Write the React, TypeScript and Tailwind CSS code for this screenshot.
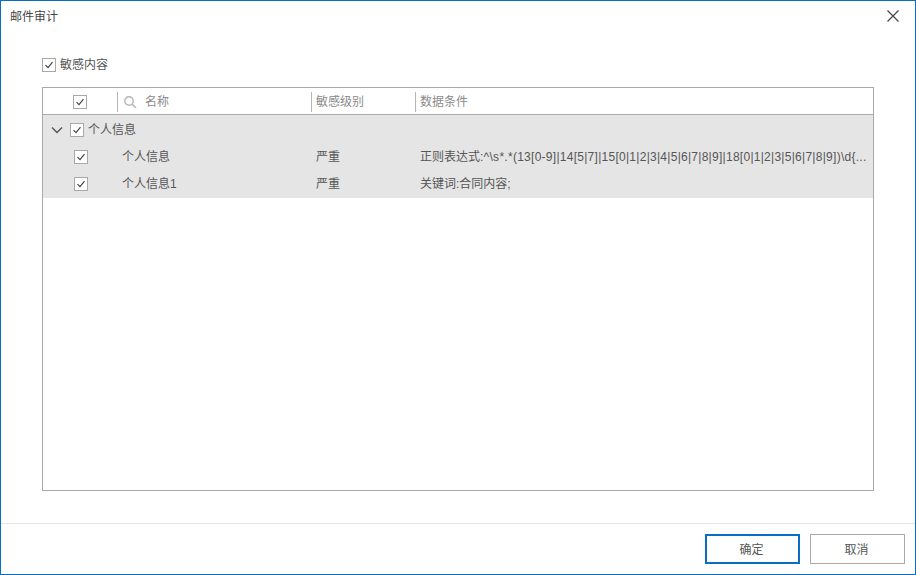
import React from "react";

function Check({ className = "" }: { className?: string }) {
  return (
    <span className={`flex h-[14px] w-[14px] shrink-0 items-center justify-center border border-[#a9a9a9] bg-white ${className}`}>
      <svg width="12" height="12" viewBox="0 0 12 12" fill="none">
        <path d="M2.5 6.2 L5 8.7 L9.5 3.2" stroke="#444444" strokeWidth="1.2" />
      </svg>
    </span>
  );
}

function Row({ name, level, cond }: { name: string; level: string; cond: React.ReactNode }) {
  return (
    <div className="flex h-[27px] items-center">
      <div className="flex w-[78px] shrink-0 pl-[31px]">
        <Check />
      </div>
      <div className="w-[195px] shrink-0 pl-[1px]">{name}</div>
      <div className="w-[104px] shrink-0">{level}</div>
      <div className="min-w-0 flex-1 whitespace-nowrap">{cond}</div>
    </div>
  );
}

export default function App() {
  return (
    <div className="flex h-[575px] w-[916px] flex-col overflow-hidden border border-[#0a6fc2] bg-white text-[12px] leading-none text-[#555555] [font-family:'Liberation_Sans','Noto_Sans_CJK_SC',sans-serif]">
      <div className="flex h-[31px] shrink-0 items-center justify-between pl-[9px] pr-[16px]">
        <span className="text-[#444444]">邮件审计</span>
        <svg className="-mt-[1px]" width="12" height="12" viewBox="0 0 12 12" fill="none">
          <path d="M0.5 0.5 L11.5 11.5 M11.5 0.5 L0.5 11.5" stroke="#444444" strokeWidth="1.2" />
        </svg>
      </div>

      <div className="flex min-h-0 flex-1 flex-col px-[41px] pb-[32px] pt-[25px]">
        <label className="flex h-[16px] shrink-0 items-center gap-[4px]">
          <Check />
          <span>敏感内容</span>
        </label>

        <div className="mt-[14px] flex min-h-0 flex-1 flex-col border border-[#a9a9a9]">
          <div className="flex h-[27px] shrink-0 items-center border-b border-[#a9a9a9] pt-[1px] text-[#8a8a8a]">
            <div className="flex h-[20px] w-[75px] shrink-0 items-center border-r border-[#b5b5b5] pl-[30px]">
              <Check />
            </div>
            <div className="flex h-[20px] w-[194px] shrink-0 items-center border-r border-[#b5b5b5] pl-[5px]">
              <svg width="14" height="14" viewBox="0 0 14 14" fill="none">
                <circle cx="6" cy="6" r="4.2" stroke="#b5b5b5" strokeWidth="1.4" />
                <path d="M9 9 L13 13" stroke="#b5b5b5" strokeWidth="1.6" />
              </svg>
              <span className="ml-[8px]">名称</span>
            </div>
            <div className="flex h-[20px] w-[104px] shrink-0 items-center border-r border-[#b5b5b5] pl-[4px]">敏感级别</div>
            <div className="pl-[4px]">数据条件</div>
          </div>

          <div className="shrink-0 bg-[#e5e5e5] pb-[1px]">
            <div className="flex h-[28px] items-center pt-[1px]">
              <svg className="ml-[8px]" width="12" height="8" viewBox="0 0 12 8" fill="none">
                <path d="M1 1.5 L6 6.5 L11 1.5" stroke="#555555" strokeWidth="1.4" />
              </svg>
              <Check className="ml-[7px]" />
              <span className="ml-[4px]">个人信息</span>
            </div>
            <Row
              name="个人信息"
              level="严重"
              cond={
                <>
                  正则表达式
                  <span className="tracking-[0.27px]">{":^\\s*.*(13[0-9]|14[5|7]|15[0|1|2|3|4|5|6|7|8|9]|18[0|1|2|3|5|6|7|8|9])\\d{..."}</span>
                </>
              }
            />
            <Row name="个人信息1" level="严重" cond="关键词:合同内容;" />
          </div>
        </div>
      </div>

      <div className="flex h-[51px] shrink-0 items-start justify-end gap-[10px] border-t border-[#e3e3e3] pr-[10px] pt-[10px]">
        <button className="h-[30px] w-[95px] border-2 border-[#0a6fc2] bg-white pr-[2px] pt-[1px] text-[#555555]">确定</button>
        <button className="h-[30px] w-[95px] border border-[#a9a9a9] bg-white pr-[2px] pt-[1px] text-[#555555]">取消</button>
      </div>
    </div>
  );
}
